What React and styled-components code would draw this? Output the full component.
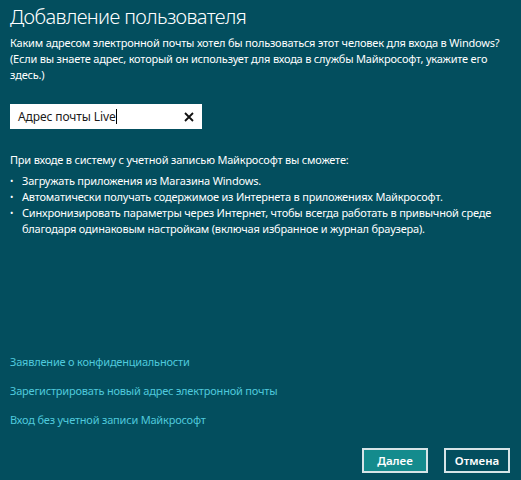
import React from 'react';
import styled, { createGlobalStyle } from 'styled-components';

const Global = createGlobalStyle`
  html, body {
    margin: 0;
    padding: 0;
    background: #034e5e;
  }
  * { box-sizing: border-box; }
`;

const Page = styled.div`
  width: 521px;
  height: 480px;
  background: #034e5e;
  color: #ffffff;
  font-family: "Noto Sans", "Open Sans", sans-serif;
  font-size: 11px;
  display: flex;
  flex-direction: column;
  padding: 3px 4px 7px 10px;
  overflow: hidden;
`;

const Title = styled.h1`
  margin: 0;
  font-size: 20px;
  line-height: 28px;
  font-weight: 300;
  letter-spacing: -0.6px;
`;

const Text = styled.p`
  margin: ${(p) => p.$mt || 0}px 0 0;
  line-height: 16px;
  letter-spacing: -0.2px;
  white-space: nowrap;
`;

const Field = styled.div`
  margin-top: 21px;
  width: 192px;
  height: 25px;
  background: #ffffff;
  color: #1a1a1a;
  display: flex;
  align-items: center;
  padding: 0 8px 0 8px;
`;

const FieldText = styled.span`
  flex: 1;
  display: flex;
  align-items: center;
  font-size: 12px;
  letter-spacing: -0.1px;
`;

const Caret = styled.span`
  display: inline-block;
  width: 1px;
  height: 15px;
  background: #000;
`;

const List = styled.ul`
  margin: 5px 0 0;
  padding: 0;
  list-style: none;
  width: 500px;
`;

const Item = styled.li`
  position: relative;
  padding-left: 12px;
  line-height: 16px;
  letter-spacing: -0.2px;
  &::before {
    content: '•';
    position: absolute;
    left: 0;
    top: 0;
    font-size: 9px;
  }
`;

const Links = styled.div`
  margin-top: auto;
  display: flex;
  flex-direction: column;
  gap: 13px;
`;

const Link = styled.a`
  color: #4fc9dc;
  line-height: 16px;
  text-decoration: none;
  letter-spacing: -0.2px;
  cursor: pointer;
`;

const Footer = styled.div`
  margin-top: 20px;
  padding-right: 7px;
  display: flex;
  justify-content: flex-end;
  gap: 16px;
`;

const Button = styled.button`
  width: 66px;
  height: 25px;
  border: 2px solid #d7e4e7;
  background: ${(p) => (p.$primary ? '#148b8d' : 'transparent')};
  color: #ffffff;
  font-family: "Noto Sans", "Open Sans", sans-serif;
  font-size: 11.5px;
  font-weight: 600;
  padding: 0;
`;

function ClearIcon() {
  return (
    <svg width="10" height="10" viewBox="0 0 10 10">
      <path d="M1 1 L9 9 M9 1 L1 9" stroke="#111" strokeWidth="1.8" />
    </svg>
  );
}

export default function App() {
  return (
    <Page>
      <Global />
      <Title>Добавление пользователя</Title>
      <Text $mt={4}>
        Каким адресом электронной почты хотел бы пользоваться этот человек для входа в Windows?
        <br />
        (Если вы знаете адрес, который он использует для входа в службы Майкрософт, укажите его
        <br />
        здесь.)
      </Text>
      <Field>
        <FieldText>Адрес почты Live<Caret /></FieldText>
        <ClearIcon />
      </Field>
      <Text $mt={23}>При входе в систему с учетной записью Майкрософт вы сможете:</Text>
      <List>
        <Item>Загружать приложения из Магазина Windows.</Item>
        <Item>Автоматически получать содержимое из Интернета в приложениях Майкрософт.</Item>
        <Item>
          Синхронизировать параметры через Интернет, чтобы всегда работать в привычной среде
          благодаря одинаковым настройкам (включая избранное и журнал браузера).
        </Item>
      </List>
      <Links>
        <Link>Заявление о конфиденциальности</Link>
        <Link>Зарегистрировать новый адрес электронной почты</Link>
        <Link>Вход без учетной записи Майкрософт</Link>
      </Links>
      <Footer>
        <Button $primary>Далее</Button>
        <Button>Отмена</Button>
      </Footer>
    </Page>
  );
}
